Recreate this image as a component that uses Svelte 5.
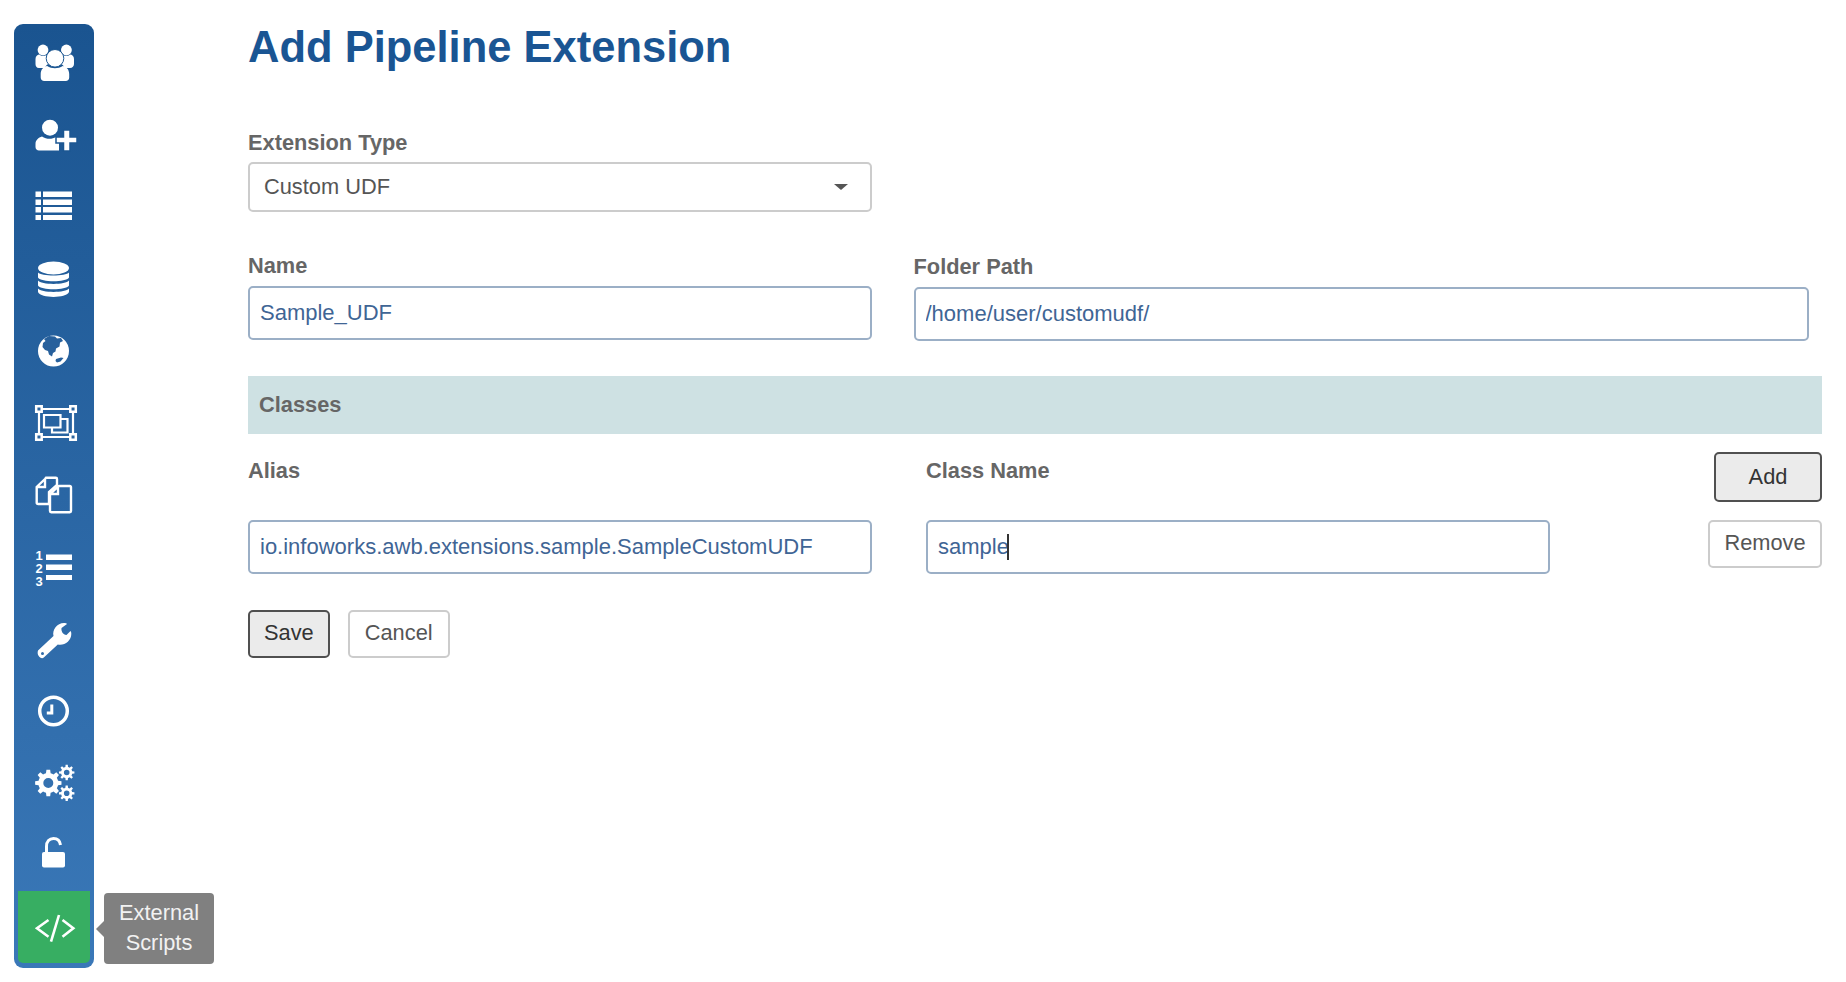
<script>
  function gear(cx, cy, outer, inner, hole, teeth) {
    let d = ''
    const step = (Math.PI * 2) / teeth
    for (let i = 0; i < teeth; i++) {
      const a = i * step
      const pts = [
        [inner, a - step * 0.5],
        [inner, a - step * 0.3],
        [outer, a - step * 0.18],
        [outer, a + step * 0.18],
        [inner, a + step * 0.3],
      ]
      for (const [r, t] of pts) {
        d += (d ? 'L' : 'M') + (cx + r * Math.cos(t)).toFixed(2) + ' ' + (cy + r * Math.sin(t)).toFixed(2)
      }
    }
    d += 'Z'
    d += `M${cx - hole} ${cy}a${hole} ${hole} 0 1 0 ${hole * 2} 0a${hole} ${hole} 0 1 0 ${-hole * 2} 0Z`
    return d
  }
</script>

<div class="page">
  <nav class="sidebar">
    <div class="item">
      <svg viewBox="0 0 48 48">
        <circle cx="13" cy="11" r="5.4" />
        <circle cx="36.4" cy="11" r="5.4" />
        <path d="M5.500 20c0-3 2-4.500 4-4.500 2 2 5 2 7 .5l4 8c-3 1-5 2.500-5.500 5H9c-2.500 0-3.500-2-3.500-4zM44 20c0-3-2-4.500-4-4.500-2 2-5 2-7 .5l-4 8c3 1 5 2.500 5.500 5H40c2.500 0 4-2 4-4z" />
        <circle cx="25" cy="19.300" r="8.800" stroke="#1c5792" stroke-width="1" />
        <path d="M10.700 35c0-4.500 3-7.500 6.500-8 4.500 3 11 3 15.500 0 3.500.5 6.500 3.500 6.500 8v3.500c0 2-1.500 3.500-3.500 3.500H14.200c-2 0-3.500-1.500-3.500-3.500z" />
      </svg>
    </div>
    <div class="item">
      <svg viewBox="0 0 48 48">
        <circle cx="20" cy="16.700" r="8" />
        <path d="M5.500 33c0-4 3-6.500 6.500-7.500 4.500 3 10 3 14 .5l3 1.500v12H9c-2 0-3.500-1.500-3.500-3.500z" />
        <path d="M33.500 19h6.500v7h7v6h-7v8h-6.500v-8H26v-6h7.500z" stroke="#1c5792" stroke-width="1.500" />
      </svg>
    </div>
    <div class="item">
      <svg viewBox="0 0 48 48">
        <path d="M5.500 8.500H11v5.500H5.500zM13 8.500h29v5.500H13zM5.500 16.500H11V22H5.500zM13 16.500h29V22H13zM5.500 24H11v5.500H5.500zM13 24h29v5.500H13zM5.500 32H11v5H5.500zM13 32h29v5H13z" />
      </svg>
    </div>
    <div class="item">
      <svg viewBox="0 0 48 48">
        <ellipse cx="23.500" cy="13" rx="15.500" ry="6.500" />
        <path d="M8 17.500c3 4 28 4 31 0v5c-3 5-28 5-31 0zM8 25.500c3 4.500 28 4.500 31 0v5c-3 5-28 5-31 0zM8 33.500c3 4.500 28 4.500 31 0v3.500c-3 6.500-28 6.500-31 0z" />
      </svg>
    </div>
    <div class="item">
      <svg viewBox="0 0 48 48">
        <circle cx="23.500" cy="24" r="15.500" />
        <path fill="#27609c" d="M14 12l5-3 6 .5 2 2 4-.5 2 3-3 1.500-.5 4-3.500 2-.5 3-2.500 1.500-1 3.500-3-2-1-3.500-3-1-2.500-3 .5-4 2.500-2zM26 32l5-1.500 2.500.5-3 3.500-3.500 1-1.500-1.500z" />
      </svg>
    </div>
    <div class="item">
      <svg viewBox="0 0 48 48" class="line">
        <path stroke-width="2.200" d="M9 10h34M9 38h34M9 10v28M43 10v28" />
        <path fill="#2c659f" stroke-width="2.500" d="M6.200 7.200h5.500v5.500H6.200zM40.300 7.200h5.500v5.500h-5.500zM6.200 35.300h5.500v5.500H6.200zM40.300 35.300h5.500v5.500h-5.500z" />
        <path stroke-width="2.200" d="M14 16h16.500v12.500H14zM30.500 20h7v13.500H22v-5" />
      </svg>
    </div>
    <div class="item">
      <svg viewBox="0 0 48 48" class="line">
        <path stroke-width="2.400" d="M15 8l-8.300 8v15.500c0 1 .5 1.500 1.500 1.500H19V21l8-7V8c0-.700-.5-1.200-1.200-1.200H16zM15 8v8H7" />
        <path stroke-width="2.400" d="M28 15.500L20 23v17c0 .7.500 1.200 1.200 1.200h18.600c.7 0 1.200-.5 1.200-1.200V16.200c0-.7-.5-1.200-1.200-1.200H29zM28 15.500V23h-8" />
      </svg>
    </div>
    <div class="item">
      <svg viewBox="0 0 48 48">
        <text x="5.500" y="16.500" class="num">1</text>
        <text x="5.500" y="29.500" class="num">2</text>
        <text x="5.500" y="42.500" class="num">3</text>
        <path d="M16 11.500h26V17H16zM16 21.500h26V27H16zM16 32h26v5H16z" />
      </svg>
    </div>
    <div class="item">
      <svg viewBox="0 0 48 48">
        <path fill-rule="evenodd" d="M8 35.500l15.500-14.500c-1.500-6 3.500-13 10.500-13 1.500 0 2.500.3 3 1l-5.500 4c-.5 3.500 1.500 6.500 5 7l4-4c.800 1 .8 2 .8 3 0 7-7 12-13.500 10.500l-14 13c-2.500 2.500-7.500-2-5.800-7zM11 38.500a1.500 1.500 0 1 0 3 0a1.500 1.500 0 1 0-3 0z" />
      </svg>
    </div>
    <div class="item">
      <svg viewBox="0 0 48 48" class="line">
        <circle cx="23.500" cy="24" r="13.800" stroke-width="3.500" />
        <path stroke-width="3" d="M21.800 17.500v8.500h-5" />
      </svg>
    </div>
    <div class="item">
      <svg viewBox="0 0 48 48">
        <path fill-rule="evenodd" d={gear(18.300, 24, 13.300, 10, 5, 8)} />
        <path fill-rule="evenodd" d={gear(36.700, 13.500, 7.800, 5.600, 2.800, 8)} />
        <path fill-rule="evenodd" d={gear(36.700, 34.300, 7.800, 5.600, 2.800, 8)} />
      </svg>
    </div>
    <div class="item">
      <svg viewBox="0 0 48 48" class="unlock">
        <path class="shackle" d="M16.500 23v-7.500c0-5 3-8 7-8s6.500 2.500 7 6.500" />
        <rect x="12" y="21" width="23" height="15.500" rx="2" />
      </svg>
    </div>
    <div class="item active">
      <svg viewBox="0 0 48 48" class="code">
        <path d="M18.500 17l-11.500 8.300 11.500 8.500M32.500 17l10.800 8.300-10.800 8.500" />
        <path d="M29 12l-8 26.700" />
      </svg>
      <div class="tip">External Scripts</div>
    </div>
  </nav>

  <main>
    <h1>Add Pipeline Extension</h1>

    <div class="field-type">
      <label for="type">Extension Type</label>
      <div class="select-wrap">
        <select id="type">
          <option>Custom UDF</option>
        </select>
        <span class="arrow"></span>
      </div>
    </div>

    <div class="row-names">
      <div class="col">
        <label for="name">Name</label>
        <input id="name" value="Sample_UDF" />
      </div>
      <div class="col folder">
        <label for="path">Folder Path</label>
        <input id="path" value="/home/user/customudf/" />
      </div>
    </div>

    <div class="bar">Classes</div>

    <div class="class-row heads">
      <div class="col"><span class="label">Alias</span></div>
      <div class="col"><span class="label">Class Name</span></div>
      <button class="btn on add">Add</button>
    </div>

    <div class="class-row values">
      <div class="col">
        <input value="io.infoworks.awb.extensions.sample.SampleCustomUDF" />
      </div>
      <div class="col caret-wrap">
        <input value="sample" />
        <span class="caret"></span>
      </div>
      <button class="btn remove">Remove</button>
    </div>

    <div class="actions">
      <button class="btn on">Save</button>
      <button class="btn cancel">Cancel</button>
    </div>
  </main>
</div>

<style>
  :global(body) {
    background: #fff;
    font-family: "Liberation Sans", Arial, sans-serif;
  }
  .page {
    display: flex;
    align-items: flex-start;
    width: 1846px;
    height: 982px;
    overflow: hidden;
    font-size: 21.800px;
    color: #666;
  }
  .sidebar {
    box-sizing: border-box;
    width: 80px;
    height: 944px;
    margin: 24px 0 0 14px;
    padding: 3px 4px 0;
    border-radius: 9px;
    background: linear-gradient(#1a5490, #3a78b8);
    flex-shrink: 0;
  }
  .item {
    position: relative;
    display: flex;
    align-items: center;
    justify-content: center;
    height: 72px;
  }
  .item svg {
    width: 48px;
    height: 48px;
    fill: #fff;
  }
  .line {
    fill: none !important;
    stroke: #fff;
  }
  .num {
    font: bold 13px "Liberation Sans", sans-serif;
    fill: #fff;
  }
  .shackle {
    fill: none;
    stroke: #fff;
    stroke-width: 3;
  }
  .code {
    fill: none !important;
    stroke: #fff;
    stroke-width: 2.600;
  }
  .active {
    background: #37ae62;
    border-radius: 0 0 5px 5px;
  }
  .tip {
    position: absolute;
    left: 86px;
    top: 2px;
    box-sizing: border-box;
    width: 110px;
    height: 71px;
    padding: 5px 8px;
    border-radius: 4px;
    background: #808080;
    color: #f2f2f2;
    font-size: 21.800px;
    line-height: 30px;
    text-align: center;
  }
  .tip::before {
    content: "";
    position: absolute;
    left: -8px;
    top: 28px;
    border-style: solid;
    border-width: 8px 8px 8px 0;
    border-color: transparent #808080 transparent transparent;
  }
  main {
    width: 1574px;
    margin-left: 154px;
  }
  h1 {
    margin: 23px 0 60px;
    font-size: 43.500px;
    line-height: 48px;
    font-weight: bold;
    color: #1a5593;
  }
  label,
  .label {
    display: block;
    height: 24px;
    margin-bottom: 8px;
    font-weight: bold;
    line-height: 24px;
    color: #666;
  }
  .field-type label {
    margin-bottom: 7px;
  }
  .select-wrap {
    position: relative;
    width: 624px;
  }
  select {
    display: block;
    box-sizing: border-box;
    width: 100%;
    height: 50px;
    padding: 0 14px 2px;
    border: 2px solid #ccc;
    border-radius: 5px;
    background: #fff;
    appearance: none;
    font: 21.800px "Liberation Sans", sans-serif;
    color: #555;
  }
  .arrow {
    position: absolute;
    right: 24px;
    top: 22px;
    border-style: solid;
    border-width: 6px 7.500px 0;
    border-color: #555 transparent transparent;
  }
  .row-names {
    display: flex;
    gap: 41.500px;
    margin-top: 42px;
  }
  .col {
    width: 624px;
    flex-shrink: 0;
  }
  .folder {
    width: 895px;
    margin-top: 1px;
  }
  input {
    display: block;
    box-sizing: border-box;
    width: 100%;
    height: 54px;
    padding: 0 10px;
    border: 2px solid #9bafc6;
    border-radius: 5px;
    background: #fff;
    font: 22px "Liberation Sans", sans-serif;
    color: #3f6595;
    outline: none;
  }
  .bar {
    box-sizing: border-box;
    height: 58px;
    margin-top: 35px;
    padding-left: 11px;
    background: #cee1e3;
    font-weight: bold;
    line-height: 58px;
  }
  .class-row {
    display: flex;
    align-items: flex-start;
    gap: 54px;
    margin-top: 18px;
  }
  .heads {
    height: 50px;
  }
  .heads .label {
    margin: 7px 0 0;
  }
  .caret-wrap {
    position: relative;
  }
  .caret {
    position: absolute;
    left: 81px;
    top: 14px;
    width: 2px;
    height: 26px;
    background: #333;
  }
  .btn {
    box-sizing: border-box;
    height: 48px;
    padding: 0 14px 2px;
    border: 2px solid #ccc;
    border-radius: 5px;
    background: #fff;
    font: 21.800px "Liberation Sans", sans-serif;
    color: #555;
  }
  .on {
    border-color: #505050;
    background: #ebebeb;
    color: #333;
  }
  .cancel {
    width: 102px;
    padding: 0 0 2px;
  }
  .add {
    width: 108px;
    height: 50px;
    margin-left: auto;
    padding-bottom: 1px;
  }
  .remove {
    width: 114px;
    margin-left: auto;
  }
  .actions {
    display: flex;
    gap: 18px;
    margin-top: 36px;
  }
</style>
